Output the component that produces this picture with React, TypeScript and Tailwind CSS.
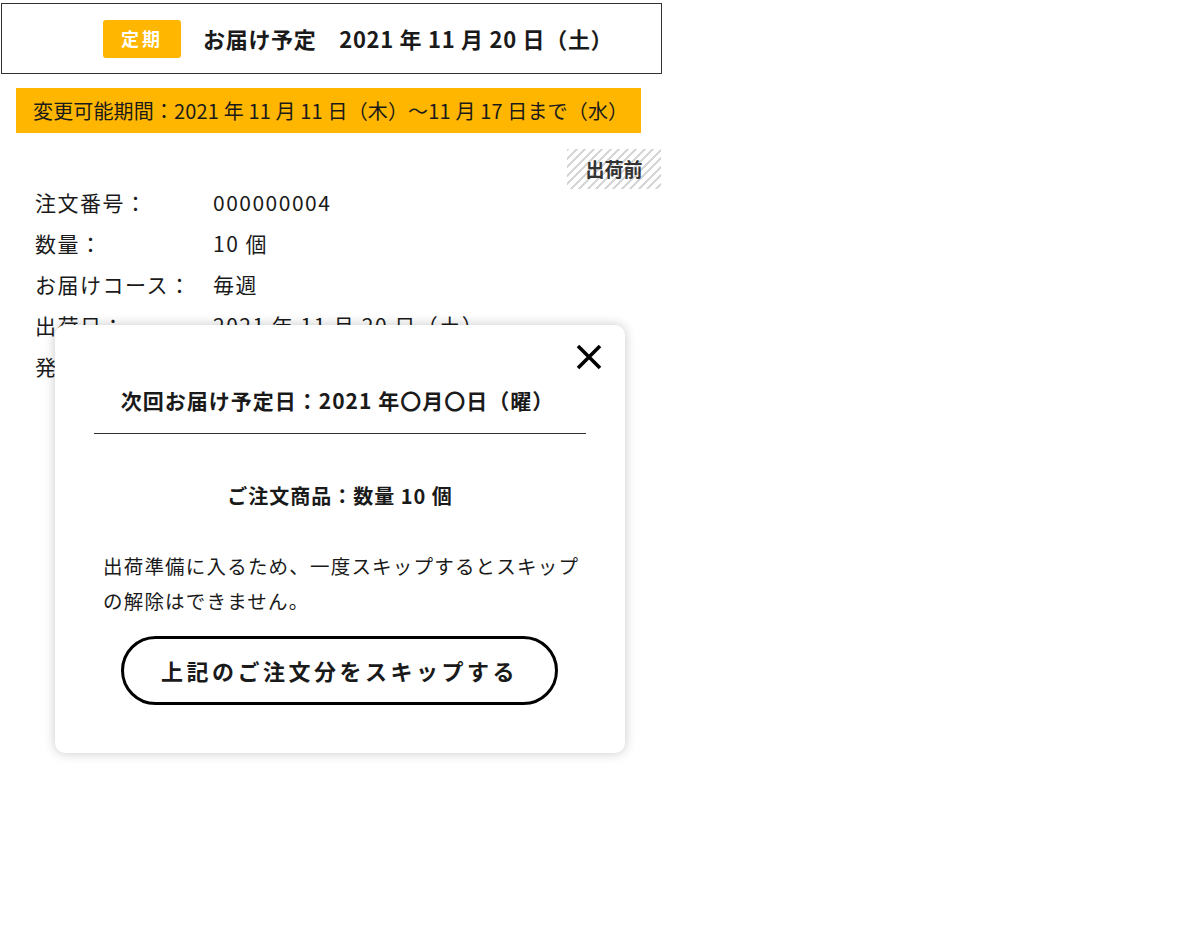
import React from "react";

const font = "font-['Noto_Sans_CJK_JP','Noto_Sans',sans-serif]";

const rows: [string, string][] = [
  ["注文番号：", "000000004"],
  ["数量：", "10 個"],
  ["お届けコース：", "毎週"],
  ["出荷日：", "2021 年 11 月 20 日（土）"],
  ["発送日：", "2021 年 11 月 20 日（土）"],
];

function CloseIcon() {
  return (
    <svg width="28" height="28" viewBox="0 0 28 28" fill="none">
      <path d="M3 3L25 25M25 3L3 25" stroke="#000" strokeWidth="3.6" strokeLinecap="butt" />
    </svg>
  );
}

export default function App() {
  return (
    <div className={`relative w-[1200px] h-[943px] bg-white text-[#1a1a1a] ${font}`}>
      <div className="w-[662px] pt-[3px] pl-[1px]">
        {/* 定期 header */}
        <div className="h-[71px] border border-[#333] flex items-center pl-[101px]">
          <span className="w-[78px] h-[38px] rounded-[3px] bg-[#ffb600] text-white font-bold text-[18px] tracking-[3px] flex items-center justify-center">
            定期
          </span>
          <span className="ml-[22px] font-bold text-[22px] tracking-[0.7px] whitespace-nowrap">
            お届け予定　2021 年 11 月 20 日（土）
          </span>
        </div>

        {/* period bar */}
        <div className="ml-[15px] mt-[14px] w-[625px] h-[45px] bg-[#ffb600] flex items-center pl-[17px] text-[20px] tracking-[0.15px] whitespace-nowrap">
          変更可能期間：2021 年 11 月 11 日（木）～11 月 17 日まで（水）
        </div>

        <div className="mt-[16px] flex justify-end">
          <span className="mr-[1px] w-[94px] h-[40px] flex items-center justify-center font-bold text-[19px] text-[#333] bg-[repeating-linear-gradient(135deg,#d6d6d6_0px,#d6d6d6_2px,#ffffff_2px,#ffffff_6px)]">
            出荷前
          </span>
        </div>

        <div className="-mt-[7px] pl-[34px] grid grid-cols-[178px_1fr] text-[21px] leading-[41px] tracking-[1.5px]">
          {rows.map(([k, v]) => (
            <React.Fragment key={k}>
              <span className="whitespace-nowrap">{k}</span>
              <span className="whitespace-nowrap">{v}</span>
            </React.Fragment>
          ))}
        </div>
      </div>

      {/* skip modal */}
      <div className="absolute left-[55px] top-[325px] w-[570px] h-[428px] bg-white rounded-[10px] shadow-[0_0_12px_rgba(0,0,0,0.22)] flex flex-col px-[39px]">
        <button className="absolute top-[18px] right-[22px]">
          <CloseIcon />
        </button>
        <div className="pt-[60px] pr-[5px] text-center font-bold text-[21px] leading-[30px] tracking-[1px] whitespace-nowrap">
          次回お届け予定日：2021 年〇月〇日（曜）
        </div>
        <div className="mt-[18px] h-px bg-[#333]" />
        <div className="mt-[47px] text-center font-bold text-[20px] leading-[30px] tracking-[1px]">
          ご注文商品：数量 10 個
        </div>
        <p className="mt-[37px] pl-[9px] text-[19.5px] leading-[35px] tracking-[1.2px] whitespace-nowrap">
          出荷準備に入るため、一度スキップするとスキップ
          <br />
          の解除はできません。
        </p>
        <button className="mt-[18px] ml-[27px] w-[437px] h-[69px] border-[3px] border-black rounded-full font-bold text-[22px] tracking-[3.5px] flex items-center justify-center">
          上記のご注文分をスキップする
        </button>
      </div>
    </div>
  );
}
